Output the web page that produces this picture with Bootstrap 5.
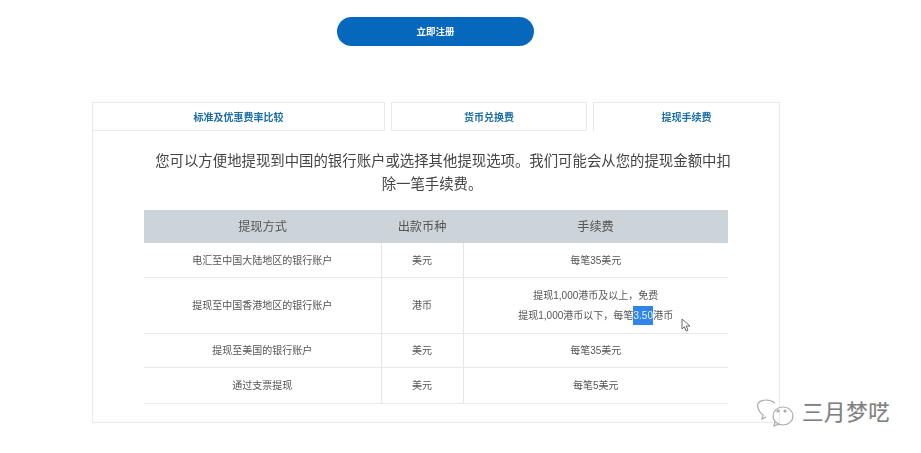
<!DOCTYPE html>
<html lang="zh-CN">
<head>
<meta charset="utf-8">
<title>提现手续费</title>
<link href="https://cdn.jsdelivr.net/npm/bootstrap@5.3.0/dist/css/bootstrap.min.css" rel="stylesheet">
<style>
html,body{height:453px;overflow:hidden;background:#fff}
body{font-family:"Liberation Sans","Noto Sans CJK SC",sans-serif;color:#555;position:relative}
.blurwrap{filter:blur(.5px);padding-top:17px}
.cta-row{margin-left:337px;width:197px;margin-bottom:56px}
.cta{display:block;width:197px;height:29px;line-height:29px;padding:0;border:0;border-radius:15px;background:#0668bd;color:#fff;font-size:9.5px;font-weight:700}
.cta:hover{background:#0668bd;color:#fff}
.shell{margin-left:92px;width:688px}
.tabbar{height:29px;gap:6px}
.tabitem{height:29px;line-height:29px;text-align:center;font-size:10px;font-weight:700;color:#1b6ea8;border:1px solid #e7e9ec;background:#fff}
.t1{width:293px}.t2{width:196px}.t3{width:187px;border-bottom:0}
.panel{height:292px;border:1px solid #e7e9ec;border-top:0;padding:0 51px}
.intro{width:600px;margin:0 0 0 -12px;padding-top:19px;font-size:14.4px;line-height:23px;text-align:center;text-indent:22px;color:#444;height:79px;white-space:nowrap}
.feetable{width:584px;margin:0;border-collapse:collapse;table-layout:fixed}
.feetable th{background:#ccd3d9;color:#555;font-weight:400;font-size:12.2px;height:33px;padding:2px 0 0;text-align:center;vertical-align:middle;border:0}
.feetable td{font-size:10px;color:#555;padding:2px 0 0;text-align:center;vertical-align:middle;border:0;border-bottom:1px solid #e8e9eb;line-height:20px;background:#fff}
.feetable td+td{border-left:1px solid #e3e5e8}
.r1 td{height:34px}.r2 td{height:56px}.r3 td{height:34px}.r4 td{height:36px}
.picked{background:#2f86e8;color:#e8f2ff;display:inline-block;line-height:19px;width:20px;text-align:center}
.pointer{position:absolute;left:681px;top:318px}
.mark-wrap{position:absolute;left:756px;top:398px;display:flex;align-items:center;gap:6px}
.mark-text{font-size:21.5px;line-height:28px;color:#808080;letter-spacing:.6px;text-shadow:0 0 1px #ccc}
</style>
</head>
<body>
<div class="blurwrap">
  <div class="cta-row"><a href="#" class="btn cta">立即注册</a></div>
  <div class="shell">
    <div class="d-flex tabbar">
      <div class="tabitem t1">标准及优惠费率比较</div>
      <div class="tabitem t2">货币兑换费</div>
      <div class="tabitem t3">提现手续费</div>
    </div>
    <div class="panel">
      <p class="intro">您可以方便地提现到中国的银行账户或选择其他提现选项。我们可能会从您的提现金额中扣<br>除一笔手续费。</p>
      <table class="feetable">
        <colgroup><col style="width:237px"><col style="width:82px"><col style="width:265px"></colgroup>
        <thead><tr><th>提现方式</th><th>出款币种</th><th>手续费</th></tr></thead>
        <tbody>
          <tr class="r1"><td>电汇至中国大陆地区的银行账户</td><td>美元</td><td>每笔35美元</td></tr>
          <tr class="r2"><td>提现至中国香港地区的银行账户</td><td>港币</td><td>提现1,000港币及以上，免费<br>提现1,000港币以下，每笔<span class="picked">3.50</span>港币</td></tr>
          <tr class="r3"><td>提现至美国的银行账户</td><td>美元</td><td>每笔35美元</td></tr>
          <tr class="r4"><td>通过支票提现</td><td>美元</td><td>每笔5美元</td></tr>
        </tbody>
      </table>
    </div>
  </div>
</div>
<svg class="pointer" width="10" height="14" viewBox="0 0 10 14" aria-hidden="true"><path d="M1 1v10l2.4-2.2L5.2 13l1.8-.8-1.8-4.1H9z" fill="#fff" stroke="#666" stroke-width="1"/></svg>
<div class="mark-wrap">
  <svg width="40" height="30" viewBox="0 0 40 30" aria-hidden="true" fill="none" stroke="#aaa" stroke-width="1.2">
    <path d="M2 5c-1 5 1 9 5 12l-1 4 4-2"/><path d="M2 5C6 1 14 1 19 5"/>
    <ellipse cx="27" cy="18" rx="10" ry="9"/><path d="M19 24l-1 4 5-2"/>
    <circle cx="22" cy="13" r="1" fill="#aaa"/><circle cx="29" cy="13" r="1" fill="#aaa"/>
  </svg>
  <span class="mark-text">三月梦呓</span>
</div>
</body>
</html>
